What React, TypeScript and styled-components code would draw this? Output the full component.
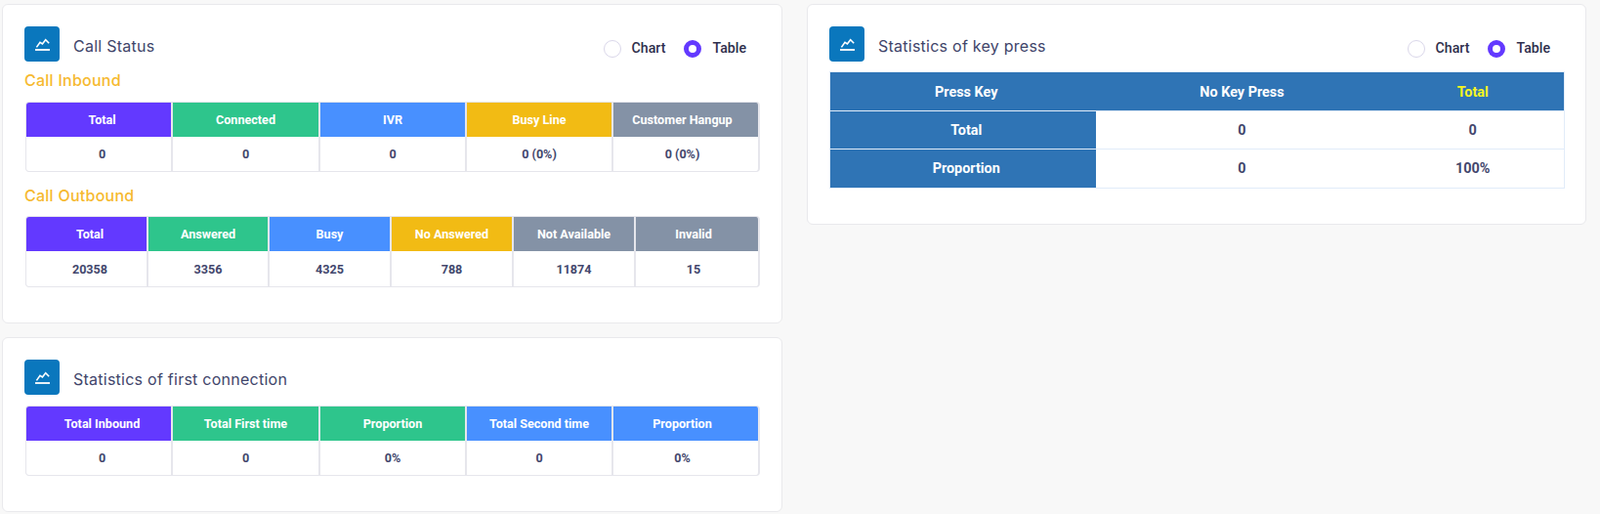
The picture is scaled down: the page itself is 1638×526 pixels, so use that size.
import { FC } from 'react';
import styled, { createGlobalStyle } from 'styled-components';

const GlobalStyle = createGlobalStyle`
  * {
    box-sizing: border-box;
  }
  body {
    margin: 0;
    background: #f8f8f8;
    font-family: Roboto, "Liberation Sans", sans-serif;
  }
`;

type Column = {
  label: string;
  value: string;
  color: string;
};

const PURPLE = '#6339ff';
const GREEN = '#2ec58c';
const BLUE = '#4890ff';
const YELLOW = '#f2bb14';
const GRAY = '#8492a6';

const inbound: Column[] = [
  { label: 'Total', value: '0', color: PURPLE },
  { label: 'Connected', value: '0', color: GREEN },
  { label: 'IVR', value: '0', color: BLUE },
  { label: 'Busy Line', value: '0 (0%)', color: YELLOW },
  { label: 'Customer Hangup', value: '0 (0%)', color: GRAY },
];

const outbound: Column[] = [
  { label: 'Total', value: '20358', color: PURPLE },
  { label: 'Answered', value: '3356', color: GREEN },
  { label: 'Busy', value: '4325', color: BLUE },
  { label: 'No Answered', value: '788', color: YELLOW },
  { label: 'Not Available', value: '11874', color: GRAY },
  { label: 'Invalid', value: '15', color: GRAY },
];

const firstConnection: Column[] = [
  { label: 'Total Inbound', value: '0', color: PURPLE },
  { label: 'Total First time', value: '0', color: GREEN },
  { label: 'Proportion', value: '0%', color: GREEN },
  { label: 'Total Second time', value: '0', color: BLUE },
  { label: 'Proportion', value: '0%', color: BLUE },
];

const ChartIcon: FC = () => (
  <svg width="36" height="36" viewBox="0 0 36 36" fill="none" stroke="#fff">
    <path d="M11 24H26" strokeWidth="1.8" />
    <path d="M12.4 21.4L16 16.4L18.4 18L21.7 13.8L25.2 17.2" strokeWidth="1.6" />
  </svg>
);

const ViewSwitch: FC = () => (
  <SSwitch>
    <SRadio />
    <SRadioLabel>Chart</SRadioLabel>
    <SRadio $checked />
    <SRadioLabel>Table</SRadioLabel>
  </SSwitch>
);

const CardHeader: FC<{ title: string; withSwitch?: boolean }> = ({ title, withSwitch = false }) => (
  <SHeader>
    <SIconBox>
      <ChartIcon />
    </SIconBox>
    <STitle>{title}</STitle>
    {withSwitch && <ViewSwitch />}
  </SHeader>
);

type StatGridProps = {
  columns: Column[];
  template?: string;
  rows?: string;
};

const StatGrid: FC<StatGridProps> = ({
  columns,
  template = '148px 149px 148px 148px 1fr',
  rows = '35px 35px',
}) => {
  const last = columns.length - 1;
  return (
    <SGrid $template={template} $rows={rows}>
      {columns.map((col, i) => (
        <SHeadCell key={`h${i}`} $color={col.color} $first={i === 0} $last={i === last}>
          {col.label}
        </SHeadCell>
      ))}
      {columns.map((col, i) => (
        <SValueCell key={`v${i}`} $first={i === 0} $last={i === last}>
          {col.value}
        </SValueCell>
      ))}
    </SGrid>
  );
};

const App: FC = () => (
  <>
    <GlobalStyle />
    <SPage>
      <SColumn>
        <SCard>
          <CardHeader title="Call Status" withSwitch />
          <SSection>Call Inbound</SSection>
          <StatGrid columns={inbound} />
          <SSection $spaced>Call Outbound</SSection>
          <StatGrid columns={outbound} template="123px 122px 123px 123px 123px 1fr" rows="35px 36px" />
        </SCard>
        <SCard>
          <CardHeader title="Statistics of first connection" />
          <SGap />
          <StatGrid columns={firstConnection} />
        </SCard>
      </SColumn>
      <SColumn>
        <SCard>
          <CardHeader title="Statistics of key press" withSwitch />
          <SKeyTable>
            <colgroup>
              <col width="272" />
              <col width="300" />
              <col />
            </colgroup>
            <thead>
              <tr>
                <SKeyHead $first>Press Key</SKeyHead>
                <SKeyHead>No Key Press</SKeyHead>
                <SKeyHead $accent $last>
                  Total
                </SKeyHead>
              </tr>
            </thead>
            <tbody>
              <tr>
                <SKeyHead $first>Total</SKeyHead>
                <SKeyCell>0</SKeyCell>
                <SKeyCell $last>0</SKeyCell>
              </tr>
              <tr>
                <SKeyHead $first>Proportion</SKeyHead>
                <SKeyCell>0</SKeyCell>
                <SKeyCell $last>100%</SKeyCell>
              </tr>
            </tbody>
          </SKeyTable>
        </SCard>
      </SColumn>
    </SPage>
  </>
);

export default App;

const SPage = styled.div`
  display: grid;
  grid-template-columns: 799px 798px;
  column-gap: 25px;
  align-items: start;
  padding: 4px 0 0 2px;
`;

const SColumn = styled.div`
  display: flex;
  flex-direction: column;
  gap: 14px;
`;

const SCard = styled.div`
  background: #fff;
  border: 1px solid #e9e9ec;
  border-radius: 6px;
  padding: 22px 22px 36px;
`;

const SHeader = styled.div`
  display: flex;
  align-items: flex-start;
  height: 36px;
`;

const SIconBox = styled.div`
  width: 36px;
  height: 36px;
  border-radius: 4px;
  background: #0a77bd;
  flex-shrink: 0;
`;

const STitle = styled.h2`
  margin: 8px 0 0 14px;
  font-family: Inter, "Noto Sans", sans-serif;
  font-size: 16px;
  line-height: 24px;
  font-weight: 400;
  letter-spacing: 0.25px;
  color: #41456a;
`;

const SSwitch = styled.div`
  display: flex;
  align-items: center;
  margin: 14px 14px 0 auto;
`;

const SRadio = styled.span<{ $checked?: boolean }>`
  width: 18px;
  height: 18px;
  border-radius: 50%;
  background: #fff;
  border: ${(p) => (p.$checked ? `5px solid ${PURPLE}` : '1px solid #dad7ea')};
`;

const SRadioLabel = styled.span`
  margin: 0 19px 2px 11px;
  font-size: 14.2px;
  line-height: 16px;
  font-weight: 500;
  color: #2f2f4d;

  &:last-child {
    margin-right: 0;
  }
`;

const SSection = styled.h3<{ $spaced?: boolean }>`
  margin: ${(p) => (p.$spaced ? '12px 0 9px' : '7px 0 10px')};
  font-family: Inter, "Noto Sans", sans-serif;
  font-size: 16px;
  line-height: 24px;
  font-weight: 500;
  letter-spacing: 0.25px;
  color: #f6b92f;
`;

const SGap = styled.div`
  height: 11px;
`;

const SGrid = styled.div<{ $template: string; $rows: string }>`
  display: grid;
  grid-template-columns: ${(p) => p.$template};
  grid-template-rows: ${(p) => p.$rows};
  column-gap: 2px;
  margin-left: 1px;
  background: #e6e6ec;
  border: 1px solid #e6e6ec;
  border-right-width: 2px;
  border-radius: 4px;
  overflow: hidden;
`;

const SHeadCell = styled.div<{ $color: string; $first: boolean; $last: boolean }>`
  display: flex;
  align-items: center;
  justify-content: center;
  padding: 0 ${(p) => (p.$last ? '7px' : '0')} 0 ${(p) => (p.$first ? '7px' : '0')};
  background: ${(p) => p.$color};
  color: #fff;
  font-size: 12.6px;
  font-weight: 700;
`;

const SValueCell = styled.div<{ $first: boolean; $last: boolean }>`
  display: flex;
  align-items: center;
  justify-content: center;
  padding: 0 ${(p) => (p.$last ? '7px' : '0')} 0 ${(p) => (p.$first ? '7px' : '0')};
  background: #fff;
  color: #43476d;
  font-size: 12.6px;
  font-weight: 700;
`;

const SKeyTable = styled.table`
  width: 753px;
  margin: 10px 0 0 0;
  border-collapse: collapse;
  table-layout: fixed;
  border: 1px solid #e1ecf9;
`;

const SKeyHead = styled.th<{ $accent?: boolean; $first?: boolean; $last?: boolean }>`
  height: 39.7px;
  padding: 0 ${(p) => (p.$last ? '7px' : '0')} 0 ${(p) => (p.$first ? '7px' : '0')};
  background: #2f74b5;
  color: ${(p) => (p.$accent ? '#f5f51e' : '#fff')};
  border-bottom: 1px solid #e1ecf9;
  font-size: 14.4px;
  font-weight: 700;
  text-align: center;

  thead & {
    padding-top: 2px;
  }
`;

const SKeyCell = styled.td<{ $last?: boolean }>`
  height: 39.7px;
  padding: 0 ${(p) => (p.$last ? '7px' : '0')} 0 0;
  background: #fff;
  color: #43476d;
  border-bottom: 1px solid #e1ecf9;
  font-size: 14.4px;
  font-weight: 700;
  text-align: center;
`;
